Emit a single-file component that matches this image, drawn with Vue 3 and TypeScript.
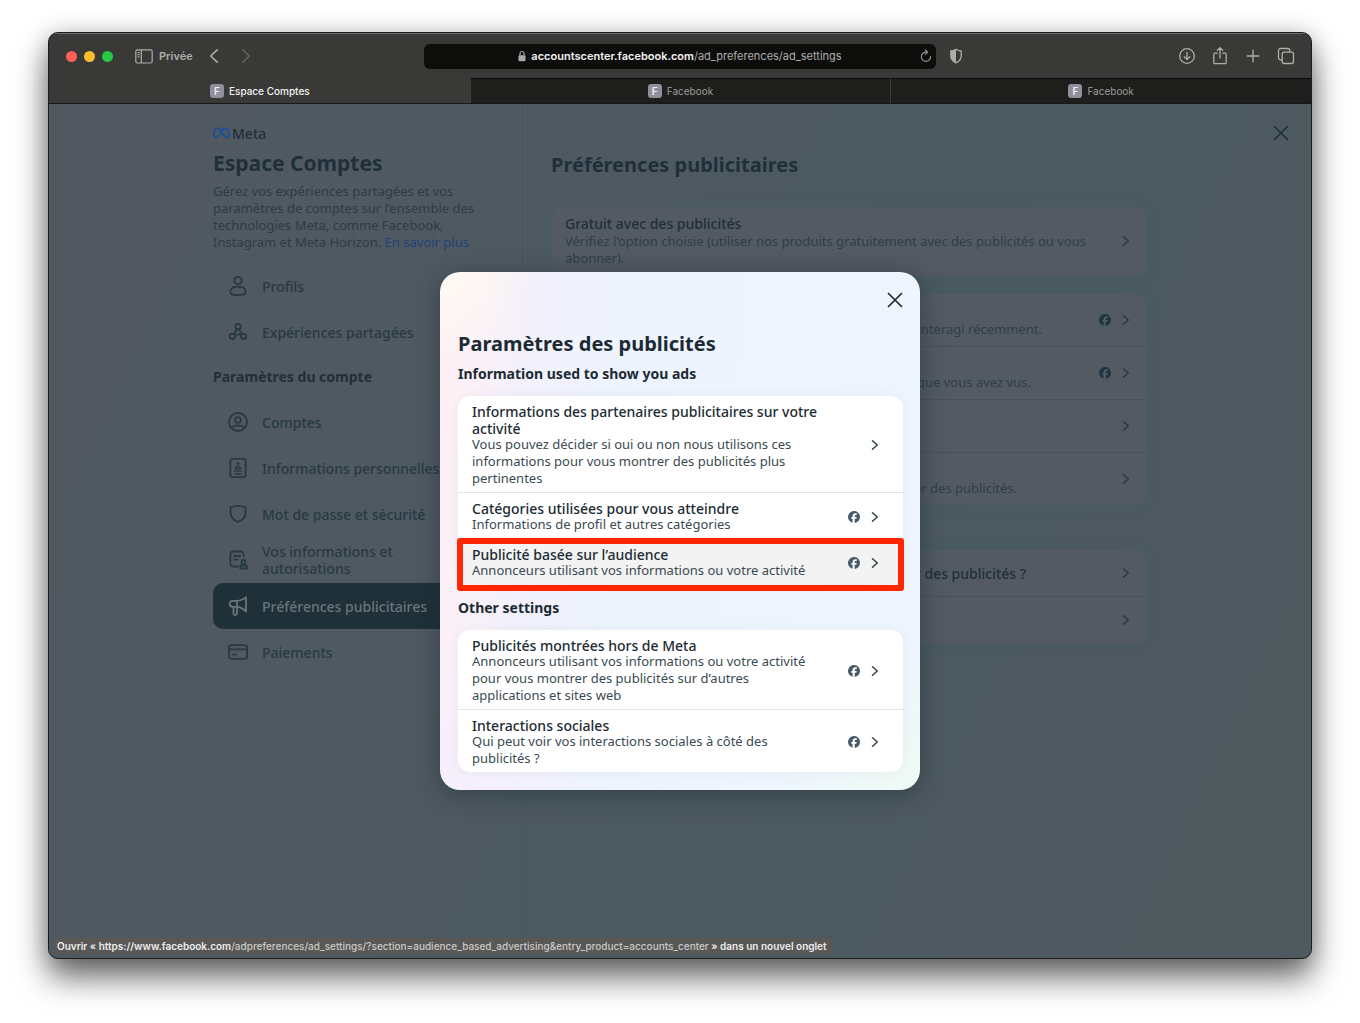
<script setup lang="ts">
interface Row {
  id: string
  title?: string
  text?: string
  facebook?: boolean
  active?: boolean
}

interface NavItem {
  label: string
  icon: string
  active?: boolean
}

const tabs = [
  { label: 'Espace Comptes', active: true },
  { label: 'Facebook', active: false },
  { label: 'Facebook', active: false },
]

const mainNav: NavItem[] = [
  { label: 'Profils', icon: 'person' },
  { label: 'Expériences partagées', icon: 'nodes' },
]

const accountNav: NavItem[] = [
  { label: 'Comptes', icon: 'account' },
  { label: 'Informations personnelles', icon: 'id' },
  { label: 'Mot de passe et sécurité', icon: 'shield' },
  { label: 'Vos informations et\nautorisations', icon: 'permissions' },
  { label: 'Préférences publicitaires', icon: 'megaphone', active: true },
  { label: 'Paiements', icon: 'card' },
]

const background: { name: string; rows: Row[] }[] = [
  {
    name: 'subscription',
    rows: [
      {
        id: 'free',
        title: 'Gratuit avec des publicités',
        text: 'Vérifiez l’option choisie (utiliser nos produits gratuitement avec des publicités ou vous\nabonner).',
      },
    ],
  },
  {
    name: 'activity',
    rows: [
      { id: 'ad-activity', text: 'Mes publicités, et les annonceurs avec lesquels vous avez interagi récemment.', facebook: true },
      { id: 'advertisers', text: 'Découvrez les catégories, les annonceurs et les publicités que vous avez vus.', facebook: true },
      { id: 'topics' },
      { id: 'ad-settings', text: 'Informations de profil récentes utilisées pour vous montrer des publicités.' },
    ],
  },
  {
    name: 'help',
    rows: [{ id: 'how', title: 'Comment utilisons-nous vos données pour présenter des publicités ?' }, { id: 'learn' }],
  },
]

const sections: { title: string; rows: Row[] }[] = [
  {
    title: 'Information used to show you ads',
    rows: [
      {
        id: 'partners',
        title: 'Informations des partenaires publicitaires sur votre\nactivité',
        text: 'Vous pouvez décider si oui ou non nous utilisons ces\ninformations pour vous montrer des publicités plus\npertinentes',
      },
      { id: 'categories', title: 'Catégories utilisées pour vous atteindre', text: 'Informations de profil et autres catégories', facebook: true },
      { id: 'audience', title: 'Publicité basée sur l’audience', text: 'Annonceurs utilisant vos informations ou votre activité', facebook: true, active: true },
    ],
  },
  {
    title: 'Other settings',
    rows: [
      {
        id: 'off-meta',
        title: 'Publicités montrées hors de Meta',
        text: 'Annonceurs utilisant vos informations ou votre activité\npour vous montrer des publicités sur d’autres\napplications et sites web',
        facebook: true,
      },
      { id: 'social', title: 'Interactions sociales', text: 'Qui peut voir vos interactions sociales à côté des\npublicités ?', facebook: true },
    ],
  },
]
</script>

<template>
  <div class="desktop">
    <div class="window">
      <header class="toolbar">
        <div class="tools">
          <div class="lights"><i class="red"></i><i class="amber"></i><i class="green"></i></div>
          <button class="tool private" type="button">
            <svg width="18" height="15" viewBox="0 0 18 15" fill="none" stroke="currentColor" stroke-width="1.2">
              <rect x="0.8" y="0.8" width="16.4" height="13.2" rx="1.8" />
              <path d="M6.3 1v13M2.6 3.6h2M2.6 5.7h2M2.6 7.8h2" />
            </svg>
            <span>Privée</span>
          </button>
          <button class="tool" type="button" aria-label="Précédent">
            <svg width="10" height="16" viewBox="0 0 10 16" fill="none" stroke="currentColor" stroke-width="1.6" stroke-linecap="round" stroke-linejoin="round"><path d="M8.2 1.8 1.6 8l6.6 6.2" /></svg>
          </button>
          <button class="tool faint" type="button" aria-label="Suivant">
            <svg width="10" height="16" viewBox="0 0 10 16" fill="none" stroke="currentColor" stroke-width="1.6" stroke-linecap="round" stroke-linejoin="round"><path d="M1.8 1.8 8.4 8l-6.6 6.2" /></svg>
          </button>
        </div>
        <div class="address">
          <span class="url">
            <svg width="8" height="12" viewBox="0 0 8 12" fill="none"><path d="M2 5.5V3.5a2 2 0 0 1 4 0v2" stroke="#a9a9a8" stroke-width="1.2" /><rect x="0.5" y="5.2" width="7" height="6" rx="1" fill="#a9a9a8" /></svg>
            <span><b>accountscenter.facebook.com</b>/ad_preferences/ad_settings</span>
          </span>
          <button class="tool reload" type="button" aria-label="Recharger">
            <svg width="12" height="14" viewBox="0 0 12 14" fill="none" stroke="currentColor" stroke-width="1.2" stroke-linecap="round" stroke-linejoin="round"><path d="M10.5 7.5A4.6 4.6 0 1 1 6 3.2h1.2M5.4 1l2.2 2.2-2.2 2.2" /></svg>
          </button>
        </div>
        <div class="tools end">
          <button class="tool guard" type="button" aria-label="Rapport de confidentialité">
            <svg width="14" height="16" viewBox="0 0 14 16"><path d="M7 1.2c1.6 1 3.3 1.6 5.2 1.8v5c0 3-2 5.3-5.2 6.800C3.800 13.300 1.800 11 1.800 8V3C3.700 2.800 5.400 2.200 7 1.200z" fill="none" stroke="currentColor" stroke-width="1.3" /><path d="M7 1.200v13.600C3.800 13.300 1.800 11 1.800 8V3C3.700 2.800 5.400 2.200 7 1.200z" fill="currentColor" /></svg>
          </button>
          <button class="tool" type="button" aria-label="Téléchargements">
            <svg width="18" height="18" viewBox="0 0 18 18" fill="none" stroke="currentColor" stroke-width="1.3" stroke-linecap="round" stroke-linejoin="round"><circle cx="9" cy="9" r="7.3" /><path d="M9 5.3v7M6.2 9.8 9 12.5l2.8-2.7" /></svg>
          </button>
          <button class="tool" type="button" aria-label="Partager">
            <svg width="18" height="20" viewBox="0 0 18 20" fill="none" stroke="currentColor" stroke-width="1.3" stroke-linecap="round" stroke-linejoin="round"><path d="M6.2 7.2H4A1.2 1.2 0 0 0 2.8 8.4v8A1.2 1.2 0 0 0 4 17.6h10a1.2 1.2 0 0 0 1.2-1.200v-8A1.200 1.200 0 0 0 14 7.200h-2.200M9 12V1.800M6.200 4.400 9 1.600l2.800 2.800" /></svg>
          </button>
          <button class="tool" type="button" aria-label="Nouvel onglet">
            <svg width="18" height="18" viewBox="0 0 18 18" fill="none" stroke="currentColor" stroke-width="1.4" stroke-linecap="round"><path d="M9 3.2v11.6M3.2 9h11.6" /></svg>
          </button>
          <button class="tool" type="button" aria-label="Aperçu des onglets">
            <svg width="18" height="18" viewBox="0 0 18 18" fill="none" stroke="currentColor" stroke-width="1.3"><rect x="5.2" y="5.2" width="11.3" height="11.3" rx="2" /><path d="M5 12.8H3.5a2 2 0 0 1-2-2V3.5a2 2 0 0 1 2-2h7.300a2 2 0 0 1 2 2V5" /></svg>
          </button>
        </div>
      </header>

      <nav class="tabs">
        <a v-for="(tab, i) in tabs" :key="i" href="#" class="tab" :class="{ current: tab.active }"><span class="favicon">F</span>{{ tab.label }}</a>
      </nav>

      <div class="page">
        <button class="close page-close" type="button" aria-label="Fermer">
          <svg width="16" height="16" viewBox="0 0 16 16" fill="none" stroke="currentColor" stroke-width="1.7" stroke-linecap="round"><path d="M1.5 1.5l13 13M14.5 1.5l-13 13" /></svg>
        </button>
        <div class="columns">
          <aside class="sidebar">
            <div class="brand">
              <svg width="17" height="12" viewBox="0 0 17 12" fill="none" stroke="#1c4f94" stroke-width="1.9"><path d="M8.5 4.6C7.2 2.3 6 1.2 4.6 1.2 2.5 1.2 1 4 1 7.3 1 9.4 1.9 10.6 3.3 10.6c1.7 0 2.9-2 5.2-6C9.7 2.2 11 1.2 12.4 1.2 14.5 1.2 16 4 16 7.3c0 2.1-.9 3.3-2.3 3.3-1.7 0-2.9-2-5.2-6z" /></svg>
              <span>Meta</span>
            </div>
            <h1>Espace Comptes</h1>
            <p class="intro">
              Gérez vos expériences partagées et vos<br />paramètres de comptes sur l’ensemble des<br />technologies Meta, comme Facebook,<br />Instagram et Meta Horizon. <a href="#">En savoir plus</a>
            </p>
            <nav v-for="(group, g) in [mainNav, accountNav]" :key="g">
              <h2 v-if="g === 1">Paramètres du compte</h2>
              <a v-for="item in group" :key="item.label" href="#" class="nav-item" :class="{ active: item.active }">
                <svg width="20" height="20" viewBox="0 0 20 20" fill="none" stroke="currentColor" stroke-width="1.8" stroke-linecap="round" stroke-linejoin="round">
                  <template v-if="item.icon === 'person'">
                    <circle cx="10" cy="4.6" r="3.7" />
                    <path d="M2.4 15.5c0-2.9 2.7-4.6 5-4.6h5.2c2.3 0 5 1.7 5 4.6 0 3.2-1.2 3.5-7.6 3.5s-7.6-.3-7.6-3.5z" />
                  </template>
                  <template v-else-if="item.icon === 'nodes'">
                    <circle cx="10" cy="4.6" r="2.7" />
                    <circle cx="4.4" cy="14.3" r="2.7" />
                    <circle cx="15.6" cy="14.3" r="2.7" />
                    <path d="M8.8 7.2 6 12M11.2 7.2 14 12M7.2 13.6c1.6-1.5 4-1.5 5.6 0" />
                  </template>
                  <template v-else-if="item.icon === 'account'">
                    <circle cx="10" cy="10" r="9" />
                    <circle cx="10" cy="8" r="2.9" />
                    <path d="M3.6 16c1-1.9 3.1-2.7 6.4-2.7s5.4.8 6.4 2.7" />
                  </template>
                  <template v-else-if="item.icon === 'id'">
                    <rect x="2.4" y="0.9" width="15.2" height="18.2" rx="2.2" />
                    <path d="M7.2 16h5.6" stroke-width="1.5" />
                    <circle cx="10" cy="5.6" r="1.5" fill="currentColor" stroke="none" />
                    <path d="M10 8.6c-1.9 0-2.7 1-2.7 2.2h5.4c0-1.2-.8-2.2-2.7-2.2zM6.6 13.2h6.8" stroke-width="1.3" />
                  </template>
                  <template v-else-if="item.icon === 'shield'">
                    <path d="M2.5 3.3C4.5 2.6 7 1.8 10 1.8s5.5.8 7.5 1.5v5.5c0 4.3-3.4 7.5-7.5 9.2-4.1-1.7-7.5-4.9-7.5-9.2z" />
                  </template>
                  <template v-else-if="item.icon === 'permissions'">
                    <path d="M9.5 16.5H5A2.6 2.6 0 0 1 2.4 13.9V4.1A2.6 2.6 0 0 1 5 1.5h8a2.6 2.6 0 0 1 2.6 2.6V6M6 6h6M6 9.7h3.5" />
                    <path d="M15.5 9.8a1.9 1.9 0 0 1 1.8 2.5l-.6 2.4h-2.4l-.6-2.4a1.9 1.9 0 0 1 1.8-2.5zM12.2 15.5h6.6v3h-6.6z" />
                  </template>
                  <template v-else-if="item.icon === 'megaphone'">
                    <path d="M9 4.8H4.6a3 3 0 0 0 0 6h4.4M9 4.8c3.4 0 6.3-1.2 9-3.6v14.4c-2.7-2.9-5.6-4.8-9-4.8M9 4.8v12.6a1.4 1.4 0 0 1-1.4 1.4h-.7a1.4 1.4 0 0 1-1.4-1.4v-6.4" />
                  </template>
                  <template v-else>
                    <rect x="0.9" y="3.2" width="18.2" height="13.6" rx="2.4" />
                    <path d="M1 7.3h18M4.5 12.6h3.5" />
                  </template>
                </svg>
                <span>{{ item.label }}</span>
              </a>
            </nav>
          </aside>

          <main class="content">
            <h2 class="heading">Préférences publicitaires</h2>
            <ul v-for="card in background" :key="card.name" class="card dim" :class="card.name">
              <li v-for="row in card.rows" :key="row.id">
                <button class="row" type="button">
                  <span class="copy">
                    <span class="row-title">{{ row.title }}</span>
                    <span v-if="row.text" class="row-text">{{ row.text }}</span>
                  </span>
                  <svg v-if="row.facebook" class="fb" width="12" height="12" viewBox="0 0 24 24" fill="currentColor"><path d="M24 12a12 12 0 1 0-14.9 11.6V15.6H6.6V12h2.5v-1.6c0-4.1 1.9-6 5.9-6 .8 0 2.1.1 2.6.3v3.3c-.3 0-.8-.1-1.4-.1-2 0-2.8.8-2.8 2.7V12h4l-.7 3.6h-3.3v8.3A12 12 0 0 0 24 12z" /></svg>
                  <svg class="chevron" width="8" height="12" viewBox="0 0 8 12" fill="none" stroke="currentColor" stroke-width="1.5" stroke-linecap="round" stroke-linejoin="round"><path d="M1.5 1.7 6.3 6l-4.8 4.3" /></svg>
                </button>
              </li>
            </ul>
          </main>
        </div>

        <div class="overlay">
          <section class="modal" role="dialog" aria-labelledby="dialog-title">
            <button class="close" type="button" aria-label="Fermer">
              <svg width="16" height="16" viewBox="0 0 16 16" fill="none" stroke="currentColor" stroke-width="1.7" stroke-linecap="round"><path d="M1.5 1.5l13 13M14.5 1.5l-13 13" /></svg>
            </button>
            <h2 id="dialog-title">Paramètres des publicités</h2>
            <template v-for="section in sections" :key="section.title">
              <h3>{{ section.title }}</h3>
              <ul class="card">
                <li v-for="row in section.rows" :key="row.id" :class="{ marked: row.active }">
                  <button class="row" type="button">
                    <span class="copy">
                      <span class="row-title">{{ row.title }}</span>
                      <span class="row-text">{{ row.text }}</span>
                    </span>
                    <svg v-if="row.facebook" class="fb" width="12" height="12" viewBox="0 0 24 24" fill="currentColor"><path d="M24 12a12 12 0 1 0-14.9 11.6V15.6H6.6V12h2.5v-1.6c0-4.1 1.9-6 5.9-6 .8 0 2.1.1 2.6.3v3.3c-.3 0-.8-.1-1.4-.1-2 0-2.8.8-2.8 2.7V12h4l-.7 3.6h-3.3v8.3A12 12 0 0 0 24 12z" /></svg>
                    <svg class="chevron" width="8" height="12" viewBox="0 0 8 12" fill="none" stroke="currentColor" stroke-width="1.5" stroke-linecap="round" stroke-linejoin="round"><path d="M1.5 1.7 6.3 6l-4.8 4.3" /></svg>
                  </button>
                </li>
              </ul>
            </template>
          </section>
        </div>

        <div class="status">
          Ouvrir « <b>https://www.facebook.com</b><span>/adpreferences/ad_settings/?section=audience_based_advertising&amp;entry_product=accounts_center</span> » dans un nouvel onglet
        </div>
      </div>
    </div>
  </div>
</template>

<style>
body {
  margin: 0;
  background: #fff;
}
</style>

<style scoped>
* {
  box-sizing: border-box;
}

h1,
h2,
h3,
p,
ul {
  margin: 0;
  padding: 0;
}

ul {
  list-style: none;
}

button {
  padding: 0;
  border: 0;
  background: none;
  font: inherit;
  color: inherit;
}

a {
  color: inherit;
  text-decoration: none;
}

svg {
  display: block;
  flex: none;
}

.desktop {
  display: flex;
  min-height: 100vh;
  padding: 32px 48px 64px;
  font-family: 'Noto Sans', 'Open Sans', sans-serif;
}

.window {
  display: flex;
  flex: 1;
  flex-direction: column;
  overflow: hidden;
  border: 1px solid #1b1d1e;
  border-radius: 10px;
  background: #393937;
  box-shadow: 0 18px 32px rgba(0, 0, 0, 0.6), 0 0 22px rgba(0, 0, 0, 0.16);
}

/* Browser chrome */
.toolbar {
  display: grid;
  grid-template-columns: minmax(0, 1fr) minmax(0, 512px) minmax(0, 1fr);
  align-items: center;
  height: 45px;
  border-top: 1px solid #6a6a69;
  font-family: Inter, 'Liberation Sans', sans-serif;
  font-size: 11px;
  color: #adadab;
}

.tools {
  display: flex;
  align-items: center;
}

.lights {
  display: flex;
  gap: 7px;
  margin: 0 22px 0 17px;
}

.lights i {
  width: 11px;
  height: 11px;
  border-radius: 50%;
}

.red {
  background: #ff5f57;
}

.amber {
  background: #febc2e;
}

.green {
  background: #28c840;
}

.tool {
  display: flex;
  align-items: center;
}

.private {
  gap: 6px;
  margin-right: 16px;
  font-weight: 600;
}

.faint {
  margin-left: 22px;
  color: #60605f;
}

.address {
  display: grid;
  grid-template-columns: 20px minmax(0, 1fr) 20px;
  align-items: center;
  height: 25px;
  border-radius: 6px;
  background: #0d0d0c;
}

.url {
  display: flex;
  grid-column: 2;
  gap: 5px;
  align-items: center;
  justify-content: center;
  white-space: nowrap;
}

.url b {
  font-weight: 600;
  color: #f2f2f2;
}

.reload {
  justify-self: center;
  color: #8f8f8e;
}

.end {
  gap: 15px;
  padding-right: 16px;
}

.guard {
  margin: 0 auto 0 13px;
}

.tabs {
  display: grid;
  grid-template-columns: repeat(3, 1fr);
  border-bottom: 1px solid #16191a;
  font-family: Inter, 'Liberation Sans', sans-serif;
  font-size: 10px;
  color: #9b9b99;
}

.tab {
  display: flex;
  gap: 5px;
  align-items: center;
  justify-content: center;
  height: 25px;
  border-top: 1px solid #0c0c0c;
  border-left: 1px solid #3c3c3b;
  background: #1e1e1d;
}

.tab.current {
  border-color: #393937;
  background: #393937;
  font-weight: 500;
  color: #f4f4f3;
}

.favicon {
  width: 14px;
  height: 14px;
  border-radius: 3px;
  background: #8f8f9d;
  font-weight: 600;
  line-height: 14px;
  text-align: center;
  color: #f0f0f4;
}

/* Page under the dialog */
.page {
  position: relative;
  flex: 1;
  padding: 0 24px;
  background: linear-gradient(115deg, #51585f 0%, #505962 25%, #4c5961 55%, #4e5a5e 100%);
  color: #1f3039;
}

.close {
  display: block;
}

.page-close {
  position: absolute;
  top: 21px;
  right: 22px;
}

.columns {
  display: grid;
  grid-template-columns: 310px minmax(0, 1fr);
  max-width: 934px;
  height: 100%;
  margin: 0 auto;
}

.sidebar {
  padding: 18px 27px 24px 0;
  border-right: 1px solid #48545c;
}

.brand {
  display: flex;
  gap: 2px;
  align-items: center;
  height: 22px;
  font-size: 14px;
  font-weight: 500;
}

h1,
.heading {
  font-weight: 700;
  line-height: 28px;
}

h1 {
  margin: 5px 0 6px;
  font-size: 21px;
}

.heading {
  margin-bottom: 28px;
  font-size: 20px;
}

.intro {
  margin-bottom: 12px;
  font-size: 13px;
  line-height: 17px;
  white-space: nowrap;
  color: #2b3d46;
}

.intro a {
  color: #1c4478;
}

.sidebar h2 {
  font-size: 14px;
  font-weight: 700;
  line-height: 44px;
}

.nav-item {
  display: flex;
  gap: 14px;
  align-items: center;
  height: 46px;
  padding-left: 15px;
  border-radius: 10px;
  font-size: 14px;
  font-weight: 500;
  line-height: 17px;
  white-space: pre;
  color: #273942;
}

.nav-item.active {
  background: #1f3039;
  color: #68757c;
}

.content {
  padding: 47px 0 24px 28px;
}

/* Cards */
.card {
  border-radius: 12px;
  background: #fff;
  box-shadow: 0 0 12px rgba(60, 90, 120, 0.06);
}

.card li + li {
  border-top: 1px solid #dee3e9;
}

.row {
  display: flex;
  align-items: center;
  width: 100%;
  padding: 7px 24px 5px 14px;
  text-align: left;
}

.copy {
  flex: 1;
  font-size: 13px;
  line-height: 17px;
  white-space: pre;
}

.row-title,
.row-text {
  display: block;
}

.row-title {
  min-height: 17px;
  font-size: 14px;
  font-weight: 500;
}

.row-text {
  margin-top: -1px;
  color: #3a4a52;
}

.fb {
  margin-right: 11px;
  color: #465a69;
}

.chevron {
  color: #33434c;
}

.card.dim {
  margin-bottom: 19px;
  background: #535a62;
  box-shadow: 0 0 14px rgba(62, 96, 106, 0.3);
}

.dim li + li {
  border-color: #45545c;
}

.dim .row {
  min-height: 46px;
  padding: 8px 17px 8px 14px;
}

.dim .row-text {
  margin-top: 1px;
  color: #2d4049;
}

.dim .fb {
  color: #1f3541;
}

.dim .chevron {
  color: #273a44;
}

.card.activity {
  margin-bottom: 45px;
}

.activity .row {
  min-height: 52px;
}

/* Dialog */
.overlay {
  position: absolute;
  inset: 0;
  display: flex;
  align-items: center;
  justify-content: center;
}

.modal {
  width: 480px;
  padding: 20px 17px 18px 18px;
  border-radius: 20px;
  background:
    radial-gradient(circle at 0 0, #fffaf2 0, rgba(255, 250, 242, 0) 90px),
    radial-gradient(circle at 0 100%, #f5effc 0, rgba(245, 239, 252, 0) 160px),
    radial-gradient(circle at 100% 100%, #effaf4 0, rgba(239, 250, 244, 0) 150px),
    linear-gradient(95deg, #fdf0f4 0%, #fbf1f7 8%, #f2f1fc 20%, #edf4fe 38%, #eef5fe 100%);
  box-shadow: 0 4px 24px rgba(20, 35, 40, 0.45);
  color: #1c2b33;
}

.modal .close {
  margin-left: auto;
}

.modal h2 {
  margin-top: 22px;
  font-size: 20px;
  font-weight: 700;
  line-height: 28px;
}

.modal h3 {
  margin: 5px 0 12px;
  font-size: 14px;
  font-weight: 700;
  line-height: 21px;
}

.marked {
  position: relative;
  background: #f3f3f3;
}

/* Highlight frame drawn over the row and its surroundings */
.marked::after {
  position: absolute;
  inset: -1px -1px -7px;
  border: 6px solid #ff2600;
  border-radius: 3px;
  content: '';
  pointer-events: none;
}

.card + h3 {
  margin-top: 13px;
}

.status {
  position: absolute;
  bottom: 4px;
  left: 4px;
  padding: 0 4px;
  background: #5a5857;
  font-family: Inter, 'Liberation Sans', sans-serif;
  font-size: 10px;
  font-weight: 600;
  line-height: 16px;
  white-space: nowrap;
  color: #ececec;
}

.status span {
  font-weight: 500;
  color: #c8c8c6;
}

.status b {
  font-weight: 600;
}
</style>
